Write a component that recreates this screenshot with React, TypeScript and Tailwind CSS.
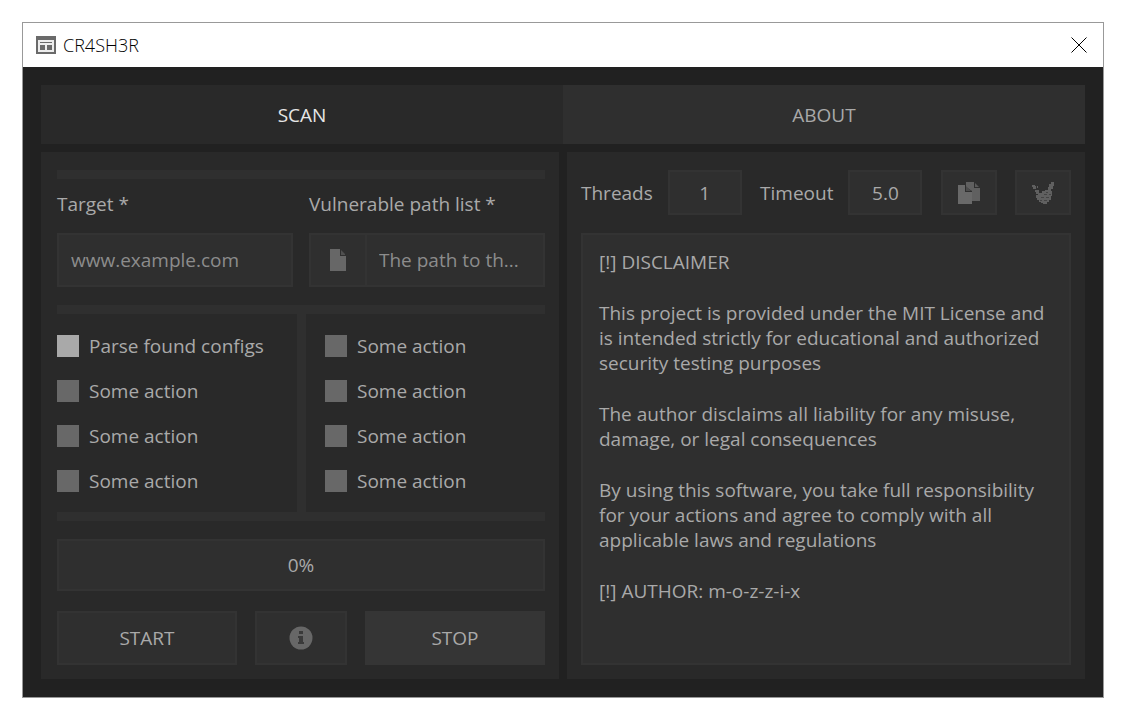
import React, { useState } from 'react';

interface Action {
  label: string;
  checked: boolean;
}

const leftActions: Action[] = [
  { label: 'Parse found configs', checked: true },
  { label: 'Some action', checked: false },
  { label: 'Some action', checked: false },
  { label: 'Some action', checked: false },
];

const rightActions: Action[] = [
  { label: 'Some action', checked: false },
  { label: 'Some action', checked: false },
  { label: 'Some action', checked: false },
  { label: 'Some action', checked: false },
];

const disclaimer = [
  '[!] DISCLAIMER',
  'This project is provided under the MIT License and is intended strictly for educational and authorized security testing purposes',
  'The author disclaims all liability for any misuse, damage, or legal consequences',
  'By using this software, you take full responsibility for your actions and agree to comply with all applicable laws and regulations',
  '[!] AUTHOR: m-o-z-z-i-x',
];

const WindowIcon = () => (
  <svg width="20" height="18" viewBox="0 0 20 18" shapeRendering="crispEdges">
    <rect width="20" height="18" rx="1" fill="#6a6a6a" />
    <rect x="2" y="4" width="16" height="12" fill="#ededed" />
    <path d="M4 6h12v1H4zM4 9h5v5H4zM11 9h5v5h-5z" fill="#6a6a6a" />
  </svg>
);

const CloseIcon = () => (
  <svg width="16" height="16" viewBox="0 0 16 16" stroke="#000" strokeWidth="1">
    <path d="M.5.5l15 15M15.5.5l-15 15" />
  </svg>
);

const FileIcon = () => (
  <svg width="16" height="22" viewBox="0 0 16 22" fill="#676767">
    <path d="M0 0h10v7h6v15H0z" />
    <path d="M11 1l4 4v1h-4z" fill="#505050" />
  </svg>
);

const CopyIcon = () => (
  <svg width="22" height="22" viewBox="0 0 22 22">
    <path d="M8 0h8v6h6v13h-8V9L8 5z" fill="#606060" />
    <path d="M17 1l4 4h-4z" fill="#5a5a5a" />
    <path d="M0 3h7v7h7v12H0z" fill="#696969" />
    <path d="M8 4l5 5H8z" fill="#4c4c4c" />
  </svg>
);

// Hand sweeping away dust
const CleanIcon = () => (
  <svg width="22" height="22" viewBox="0 0 22 22" shapeRendering="crispEdges">
    <path
      d="M19 0h3v4h-1v3h-2v2h1v5h-1v4h-2v2h-2v2h-4v-1H9v-1H7v-2H5v-2H4v-3h2v-2h4V9h3V8h3V5h1V2h2z"
      fill="#606060"
    />
    <path d="M0 3h3v1h1v3H1V5H0zM5 4h1v2H5zM3 8h4v4H4v-2H3z" fill="#606060" />
    <path
      d="M14 10h2v1h-2zM12 12h3v1h-3zM17 12h2v1h-2zM9 15h3v1H9zM14 15h3v1h-3zM8 18h2v1H8zM12 18h3v1h-3z"
      fill="#444444"
    />
  </svg>
);

const InfoIcon = () => (
  <svg width="24" height="24" viewBox="0 0 24 24">
    <circle cx="12" cy="12" r="11.5" fill="#676767" />
    <path d="M10 5h4v3h-4zM9 10h5v6h1v2H9v-2h1v-4H9z" fill="#3a3a3a" />
  </svg>
);

const Bar = () => <div className="h-[9px] bg-[#2f2f2f]" />;

const ActionList: React.FC<{ actions: Action[] }> = ({ actions }) => {
  const [items, setItems] = useState<Action[]>(actions);

  const toggle = (idx: number) => {
    setItems(items.map((a, i) => (i === idx ? { ...a, checked: !a.checked } : a)));
  };

  return (
    <div className="flex flex-col gap-[19px]">
      {items.map((a, idx) => (
        <label key={idx} className="flex h-[26px] items-center gap-2.5">
          <input
            type="checkbox"
            checked={a.checked}
            onChange={() => toggle(idx)}
            className="size-[22px] shrink-0 appearance-none bg-[#686868] checked:bg-[#a9a9a9]"
          />
          {a.label}
        </label>
      ))}
    </div>
  );
};

const NumberField: React.FC<{ id: string; label: string; value: string }> = ({ id, label, value }) => (
  <div className="flex h-full items-center gap-[15px]">
    <label htmlFor={id}>{label}</label>
    <input
      id={id}
      defaultValue={value}
      className="h-full w-[74px] border-2 border-[#333333] bg-[#2f2f2f] text-center outline-none"
    />
  </div>
);

const App: React.FC = () => {
  const [tab, setTab] = useState<'scan' | 'about'>('scan');

  return (
    <div className="flex min-h-screen flex-col bg-white p-[22px] font-['Open_Sans',sans-serif] text-[19px] leading-[26px] text-[#a9a9a9]">
      <div className="flex flex-col border border-[#999999] bg-[#212121]">
        {/* Title bar */}
        <header className="flex h-11 items-center gap-[7px] bg-white pr-4 pl-[13px] text-black">
          <WindowIcon />
          <h1 className="flex-1 text-[18px] font-light">CR4SH3R</h1>
          <button aria-label="Close">
            <CloseIcon />
          </button>
        </header>

        <main className="flex flex-col gap-2 p-[18px]">
          <nav className="grid h-[59px] grid-cols-2">
            <button
              onClick={() => setTab('scan')}
              className={tab === 'scan' ? 'bg-[#292929] text-[#e6e6e6]' : 'bg-[#2f2f2f]'}
            >
              SCAN
            </button>
            <button
              onClick={() => setTab('about')}
              className={tab === 'about' ? 'bg-[#292929] text-[#e6e6e6]' : 'bg-[#2f2f2f]'}
            >
              ABOUT
            </button>
          </nav>

          <div className="grid grid-cols-2 gap-2">
            {/* Scan settings */}
            <section className="flex flex-col bg-[#292929] pt-[18px] pr-3.5 pb-3.5 pl-4">
              <Bar />
              <div className="grid grid-cols-2 gap-4 pt-3 pb-[18px]">
                <div className="flex min-w-0 flex-col gap-4">
                  <label htmlFor="target">Target *</label>
                  <input
                    id="target"
                    placeholder="www.example.com"
                    className="h-[54px] w-full border-2 border-[#333333] bg-[#2f2f2f] px-3 outline-none placeholder:text-[#8c8c8c]"
                  />
                </div>
                <div className="flex min-w-0 flex-col gap-4">
                  <label htmlFor="paths">Vulnerable path list *</label>
                  <div className="flex h-[54px] border-2 border-[#333333] bg-[#2f2f2f]">
                    <button
                      aria-label="Open file"
                      className="flex w-14 shrink-0 items-center justify-center border-r-2 border-[#333333]"
                    >
                      <FileIcon />
                    </button>
                    <input
                      id="paths"
                      placeholder="The path to th..."
                      className="w-full min-w-0 px-3 outline-none placeholder:text-[#8c8c8c]"
                    />
                  </div>
                </div>
              </div>
              <Bar />
              <div className="grid grid-cols-[240fr_9px_239fr]">
                <div className="pt-[19px] pb-[18px]">
                  <ActionList actions={leftActions} />
                </div>
                <div className="bg-[#2f2f2f]" />
                <div className="pt-[19px] pb-[18px] pl-[19px]">
                  <ActionList actions={rightActions} />
                </div>
              </div>
              <Bar />
              <div
                role="progressbar"
                aria-label="Scan progress"
                aria-valuenow={0}
                className="mt-[18px] flex h-[52px] items-center justify-center border-2 border-[#333333] bg-[#2f2f2f]"
              >
                0%
              </div>
              <div className="mt-5 grid h-[54px] grid-cols-[180fr_92fr_180fr] gap-[18px]">
                <button className="border-2 border-[#333333] bg-[#2f2f2f]">START</button>
                <button
                  aria-label="Info"
                  className="flex items-center justify-center border-2 border-[#333333] bg-[#2f2f2f]"
                >
                  <InfoIcon />
                </button>
                <button className="bg-[#353535]">STOP</button>
              </div>
            </section>

            {/* Output */}
            <section className="flex flex-col gap-[18px] bg-[#292929] px-3.5 pt-[18px] pb-3.5">
              <div className="flex h-[45px] items-center justify-between">
                <NumberField id="threads" label="Threads" value="1" />
                <NumberField id="timeout" label="Timeout" value="5.0" />
                <button
                  aria-label="Copy"
                  className="flex h-full w-14 items-center justify-center border-2 border-[#333333] bg-[#2f2f2f]"
                >
                  <CopyIcon />
                </button>
                <button
                  aria-label="Clear"
                  className="flex h-full w-14 items-center justify-center border-2 border-[#333333] bg-[#2f2f2f]"
                >
                  <CleanIcon />
                </button>
              </div>
              <div className="flex flex-1 flex-col gap-[26px] border-2 border-[#333333] bg-[#2f2f2f] px-4 pt-[15px] leading-[25px]">
                {disclaimer.map((text, idx) => (
                  <p key={idx}>{text}</p>
                ))}
              </div>
            </section>
          </div>
        </main>
      </div>
    </div>
  );
};

export default App;
